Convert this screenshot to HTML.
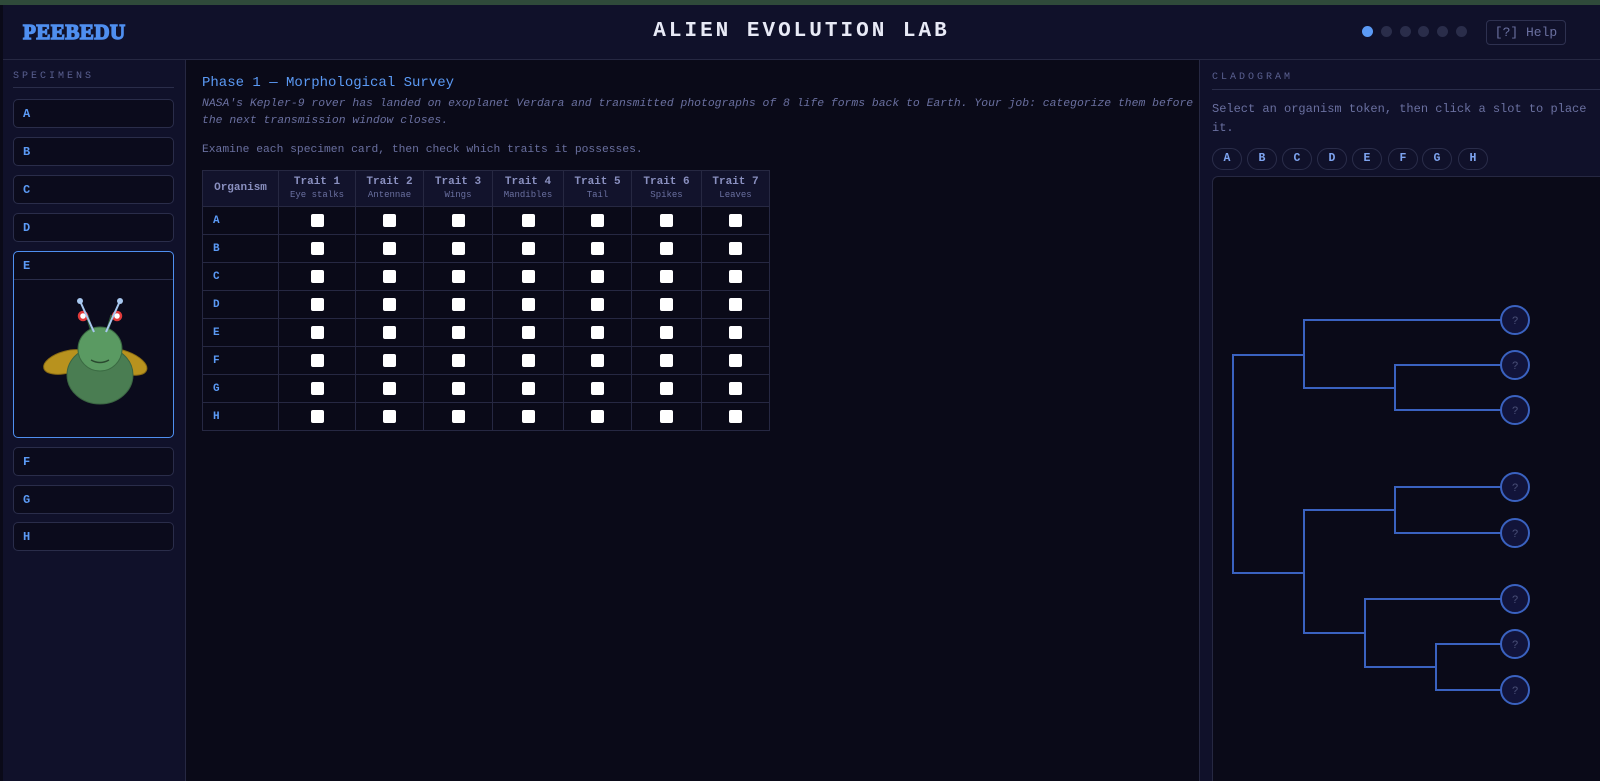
<!DOCTYPE html>
<html style="overflow:hidden;width:1600px;height:781px"><head><meta charset="utf-8"><style>
*{box-sizing:border-box;margin:0;padding:0}
html,body{width:1600px;height:781px;overflow:hidden;background:#0a0a18}
#w{position:relative;width:1600px;height:781px;overflow:hidden;background:#0a0a18;font-family:"Liberation Mono",monospace;color:#8a90b8}
.top{position:absolute;left:0;top:0;width:1600px;height:5px;background:#2f4a3a}
.hdr{position:absolute;left:3px;top:5px;width:1597px;height:55px;background:#10112a;border-bottom:1px solid #262842;overflow:hidden}
.logo{position:absolute;left:20px;top:15px;font:bold 21px "Liberation Serif",serif;color:#4f8ff0;letter-spacing:0.5px;-webkit-text-stroke:1.4px #4f8ff0}
.title{position:absolute;left:0;width:100%;top:15px;text-align:center;font:bold 21px "Liberation Mono",monospace;color:#e8eaf6;letter-spacing:3px}
.dot{position:absolute;top:21px;width:11px;height:11px;border-radius:50%;background:#2a2d4a}
.help{position:absolute;left:1483px;top:15px;width:80px;height:25px;border:1px solid #2e3150;border-radius:4px;font-size:13px;color:#6a70a0;text-align:center;line-height:23px}
.side{position:absolute;left:3px;top:60px;width:183px;height:721px;background:#10112a;border-right:1px solid #262842;overflow:hidden}
.lab{font-size:10px;letter-spacing:3px;color:#5a6090}
.side .lab{position:absolute;left:10px;top:11px}
.side .ln{position:absolute;left:10px;top:27px;width:161px;height:1px;background:#2a2d4a}
.it{position:absolute;left:10px;width:161px;height:29px;border:1px solid #2a2d4a;border-radius:5px;background:#0b0b1c;font-weight:bold;font-size:12px;color:#5b9af5;padding:7px 0 0 9px}
.main{position:absolute;left:186px;top:60px;width:1013px;height:721px;overflow:hidden}
h2{position:absolute;left:16px;top:15px;font-weight:normal;font-size:14px;color:#5b9af5}
.desc{position:absolute;left:16px;top:36px;width:1000px;white-space:nowrap;font-style:italic;font-size:11.4px;line-height:17px;color:#6a70a0}
.ex{position:absolute;left:16px;top:84px;font-size:11.3px;color:#6a70a0}
table{position:absolute;left:16px;top:110px;border-collapse:collapse}
td,th{border:1px solid #262842;text-align:center;height:28px;padding:0}
th{background:#12132c;height:36px;font-size:11px;color:#8a90c0;font-weight:bold;line-height:13px}
th small{display:block;font-size:9px;font-weight:normal;color:#6a70a0}
td:first-child{text-align:left;padding-left:10px;color:#5b9af5;font-weight:bold;font-size:11px}
.cb{display:inline-block;width:13px;height:13px;background:#fff;border-radius:2px;vertical-align:middle}
.right{position:absolute;left:1199px;top:60px;width:401px;height:721px;background:#10112a;border-left:1px solid #262842;overflow:hidden}
.right .lab{position:absolute;left:12px;top:12px}
.right .ln{position:absolute;left:12px;top:29px;width:388px;height:1px;background:#2a2d4a}
.right .txt{position:absolute;left:12px;top:40px;width:386px;font-size:12px;line-height:19px;color:#6a70a0}
.tok{position:absolute;top:88px;width:30px;height:22px;border:1px solid #2a2d4a;border-radius:11px;text-align:center;font-weight:bold;font-size:11.5px;line-height:20px;color:#7ea4f0}
.box{position:absolute;left:12px;top:116px;width:395px;height:620px;background:#0a0a18;border:1px solid #262842;border-radius:6px}
</style></head><body><div id="w">
<div class="top"></div>
<div class="hdr"><div class="logo">PEEBEDU</div><div class="title">ALIEN EVOLUTION LAB</div>
<div class="dot" style="left:1359px;background:#5b9af5"></div><div class="dot" style="left:1378px"></div><div class="dot" style="left:1397px"></div><div class="dot" style="left:1415px"></div><div class="dot" style="left:1434px"></div><div class="dot" style="left:1453px"></div>
<div class="help">[?] Help</div></div>
<div class="side"><div class="lab">SPECIMENS</div><div class="ln"></div>
<div class="it" style="top:39px">A</div><div class="it" style="top:77px">B</div><div class="it" style="top:115px">C</div><div class="it" style="top:153px">D</div>
<div class="it" style="top:191px;height:187px;border-color:#4f8ff0;padding:0">
<div style="height:28px;border-bottom:1px solid #2a2d4a;padding:7px 0 0 9px">E</div>
<svg width="159" height="156" viewBox="0 0 159 156" style="display:block">
<ellipse cx="53" cy="82" rx="24" ry="11" transform="rotate(-15 53 82)" fill="#b8921e" stroke="#8a6c14"/>
<ellipse cx="110" cy="82" rx="24" ry="11" transform="rotate(20 110 82)" fill="#b8921e" stroke="#8a6c14"/>
<ellipse cx="86" cy="95" rx="33" ry="29" fill="#4a7d52" stroke="#3a6442"/>
<line x1="78" y1="52" x2="73" y2="35" stroke="#2f5a36" stroke-width="3"/><line x1="93" y1="52" x2="98" y2="35" stroke="#2f5a36" stroke-width="3"/>
<circle cx="69" cy="36" r="4" fill="#fff" stroke="#e03a3a" stroke-width="2.5"/><circle cx="103" cy="36" r="4" fill="#fff" stroke="#e03a3a" stroke-width="2.5"/>
<circle cx="86" cy="69" r="22" fill="#5a9a62" stroke="#3a6a42"/>
<line x1="80" y1="52" x2="66" y2="21" stroke="#a8c8f0" stroke-width="2"/><line x1="92" y1="52" x2="106" y2="21" stroke="#a8c8f0" stroke-width="2"/>
<circle cx="66" cy="21" r="3" fill="#a8c8f0"/><circle cx="106" cy="21" r="3" fill="#a8c8f0"/>
<path d="M77 80 Q86 85 95 80" fill="none" stroke="#2a4a30" stroke-width="1.5"/>
</svg></div>
<div class="it" style="top:387px">F</div><div class="it" style="top:425px">G</div><div class="it" style="top:462px">H</div>
</div>
<div class="main"><h2>Phase 1 — Morphological Survey</h2>
<div class="desc">NASA's Kepler-9 rover has landed on exoplanet Verdara and transmitted photographs of 8 life forms back to Earth. Your job: categorize them before<br>the next transmission window closes.</div>
<div class="ex">Examine each specimen card, then check which traits it possesses.</div>
<table>
<tr><th style="width:76px">Organism</th><th style="width:77px">Trait 1<small>Eye stalks</small></th><th style="width:68px">Trait 2<small>Antennae</small></th><th style="width:69px">Trait 3<small>Wings</small></th><th style="width:71px">Trait 4<small>Mandibles</small></th><th style="width:68px">Trait 5<small>Tail</small></th><th style="width:70px">Trait 6<small>Spikes</small></th><th style="width:68px">Trait 7<small>Leaves</small></th></tr>
<tr><td>A</td><td><i class="cb"></i></td><td><i class="cb"></i></td><td><i class="cb"></i></td><td><i class="cb"></i></td><td><i class="cb"></i></td><td><i class="cb"></i></td><td><i class="cb"></i></td></tr>
<tr><td>B</td><td><i class="cb"></i></td><td><i class="cb"></i></td><td><i class="cb"></i></td><td><i class="cb"></i></td><td><i class="cb"></i></td><td><i class="cb"></i></td><td><i class="cb"></i></td></tr>
<tr><td>C</td><td><i class="cb"></i></td><td><i class="cb"></i></td><td><i class="cb"></i></td><td><i class="cb"></i></td><td><i class="cb"></i></td><td><i class="cb"></i></td><td><i class="cb"></i></td></tr>
<tr><td>D</td><td><i class="cb"></i></td><td><i class="cb"></i></td><td><i class="cb"></i></td><td><i class="cb"></i></td><td><i class="cb"></i></td><td><i class="cb"></i></td><td><i class="cb"></i></td></tr>
<tr><td>E</td><td><i class="cb"></i></td><td><i class="cb"></i></td><td><i class="cb"></i></td><td><i class="cb"></i></td><td><i class="cb"></i></td><td><i class="cb"></i></td><td><i class="cb"></i></td></tr>
<tr><td>F</td><td><i class="cb"></i></td><td><i class="cb"></i></td><td><i class="cb"></i></td><td><i class="cb"></i></td><td><i class="cb"></i></td><td><i class="cb"></i></td><td><i class="cb"></i></td></tr>
<tr><td>G</td><td><i class="cb"></i></td><td><i class="cb"></i></td><td><i class="cb"></i></td><td><i class="cb"></i></td><td><i class="cb"></i></td><td><i class="cb"></i></td><td><i class="cb"></i></td></tr>
<tr><td>H</td><td><i class="cb"></i></td><td><i class="cb"></i></td><td><i class="cb"></i></td><td><i class="cb"></i></td><td><i class="cb"></i></td><td><i class="cb"></i></td><td><i class="cb"></i></td></tr>
</table></div>
<div class="right"><div class="lab">CLADOGRAM</div><div class="ln"></div>
<div class="txt">Select an organism token, then click a slot to place it.</div>
<div class="tok" style="left:12px">A</div><div class="tok" style="left:47px">B</div><div class="tok" style="left:82px">C</div><div class="tok" style="left:117px">D</div><div class="tok" style="left:152px">E</div><div class="tok" style="left:188px">F</div><div class="tok" style="left:222px">G</div><div class="tok" style="left:258px">H</div>
<div class="box"></div></div>
<svg style="position:absolute;left:0;top:0;display:block" width="1600" height="781">
<g fill="none" stroke="#3a62c0" stroke-width="2">
<path d="M1501 320H1304V388H1395"/><path d="M1501 365H1395V410H1501"/><path d="M1304 355H1233V573H1304"/>
<path d="M1501 487H1395V533H1501"/><path d="M1395 510H1304V633H1365"/><path d="M1501 599H1365V667H1436"/><path d="M1501 644H1436V690H1501"/>
</g>
<g fill="#12143a" stroke="#3a62c0" stroke-width="2">
<circle cx="1515" cy="320" r="14"/><circle cx="1515" cy="365" r="14"/><circle cx="1515" cy="410" r="14"/><circle cx="1515" cy="487" r="14"/><circle cx="1515" cy="533" r="14"/><circle cx="1515" cy="599" r="14"/><circle cx="1515" cy="644" r="14"/><circle cx="1515" cy="690" r="14"/>
</g>
<g fill="#4a5078" font-family="Liberation Sans,sans-serif" font-size="11" text-anchor="middle">
<text x="1515" y="324">?</text><text x="1515" y="369">?</text><text x="1515" y="414">?</text><text x="1515" y="491">?</text><text x="1515" y="537">?</text><text x="1515" y="603">?</text><text x="1515" y="648">?</text><text x="1515" y="694">?</text>
</g></svg>
</div></body></html>
